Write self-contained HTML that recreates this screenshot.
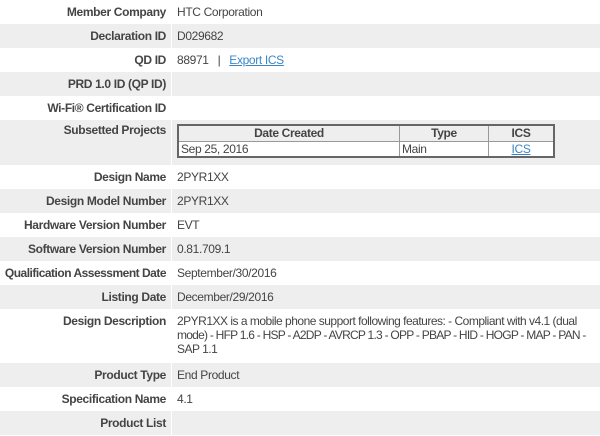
<html><head><style>
body{margin:0;width:600px;height:436px;background:#fff;font-family:"Liberation Sans",Arial,sans-serif;font-size:12px;color:#444;overflow:hidden;letter-spacing:-0.35px}
.r{position:absolute;left:0;width:600px;display:flex}
.g{background:#eee}
.l{width:166px;flex-shrink:0;padding-right:5px;text-align:right;font-weight:bold;border-right:1px solid #fff;box-sizing:content-box;white-space:nowrap}
.v{padding-left:5px;flex:1;min-width:0}
a{color:#3a87c8;text-decoration:underline}
table{border-collapse:collapse;border:2px solid #666;background:#fff;width:378px;margin-top:4px}
td,th{border:1px solid #999;font-size:12px;color:#444;padding:0 2px;height:16px;letter-spacing:-0.35px}
th{font-weight:bold;background:#eee}
</style></head><body>
<div class="r" style="top:0;height:24px;line-height:24px"><div class="l">Member Company</div><div class="v">HTC Corporation</div></div>
<div class="r g" style="top:24px;height:24px;line-height:24px"><div class="l">Declaration ID</div><div class="v">D029682</div></div>
<div class="r" style="top:48px;height:24px;line-height:24px"><div class="l">QD ID</div><div class="v">88971 &nbsp; | &nbsp; <a>Export ICS</a></div></div>
<div class="r g" style="top:72px;height:24px;line-height:24px"><div class="l">PRD 1.0 ID (QP ID)</div><div class="v"></div></div>
<div class="r" style="top:96px;height:24px;line-height:24px"><div class="l">Wi-Fi® Certification ID</div><div class="v"></div></div>
<div class="r g" style="top:120px;height:45px;line-height:20px"><div class="l">Subsetted Projects</div><div class="v">
<table><tr><th style="width:216px">Date Created</th><th style="width:84px">Type</th><th>ICS</th></tr>
<tr><td>Sep 25, 2016</td><td>Main</td><td style="text-align:center"><a>ICS</a></td></tr></table></div></div>
<div class="r" style="top:165px;height:24px;line-height:24px"><div class="l">Design Name</div><div class="v">2PYR1XX</div></div>
<div class="r g" style="top:189px;height:24px;line-height:24px"><div class="l">Design Model Number</div><div class="v">2PYR1XX</div></div>
<div class="r" style="top:213px;height:24px;line-height:24px"><div class="l">Hardware Version Number</div><div class="v">EVT</div></div>
<div class="r g" style="top:237px;height:24px;line-height:24px"><div class="l">Software Version Number</div><div class="v">0.81.709.1</div></div>
<div class="r" style="top:261px;height:24px;line-height:24px"><div class="l" style="letter-spacing:-0.5px">Qualification Assessment Date</div><div class="v">September/30/2016</div></div>
<div class="r g" style="top:285px;height:24px;line-height:24px"><div class="l">Listing Date</div><div class="v">December/29/2016</div></div>
<div class="r" style="top:309px;height:54px;line-height:14px;padding-top:5px;box-sizing:border-box"><div class="l">Design Description</div><div class="v" style="white-space:nowrap;letter-spacing:-0.5px">2PYR1XX is a mobile phone support following features: - Compliant with v4.1 (dual<br><span style="letter-spacing:-0.75px">mode) - HFP 1.6 - HSP - A2DP - AVRCP 1.3 - OPP - PBAP - HID - HOGP - MAP - PAN -</span><br>SAP 1.1</div></div>
<div class="r g" style="top:363px;height:24px;line-height:24px"><div class="l">Product Type</div><div class="v">End Product</div></div>
<div class="r" style="top:387px;height:24px;line-height:24px"><div class="l">Specification Name</div><div class="v">4.1</div></div>
<div class="r g" style="top:411px;height:24px;line-height:24px"><div class="l">Product List</div><div class="v"></div></div>
</body></html>
